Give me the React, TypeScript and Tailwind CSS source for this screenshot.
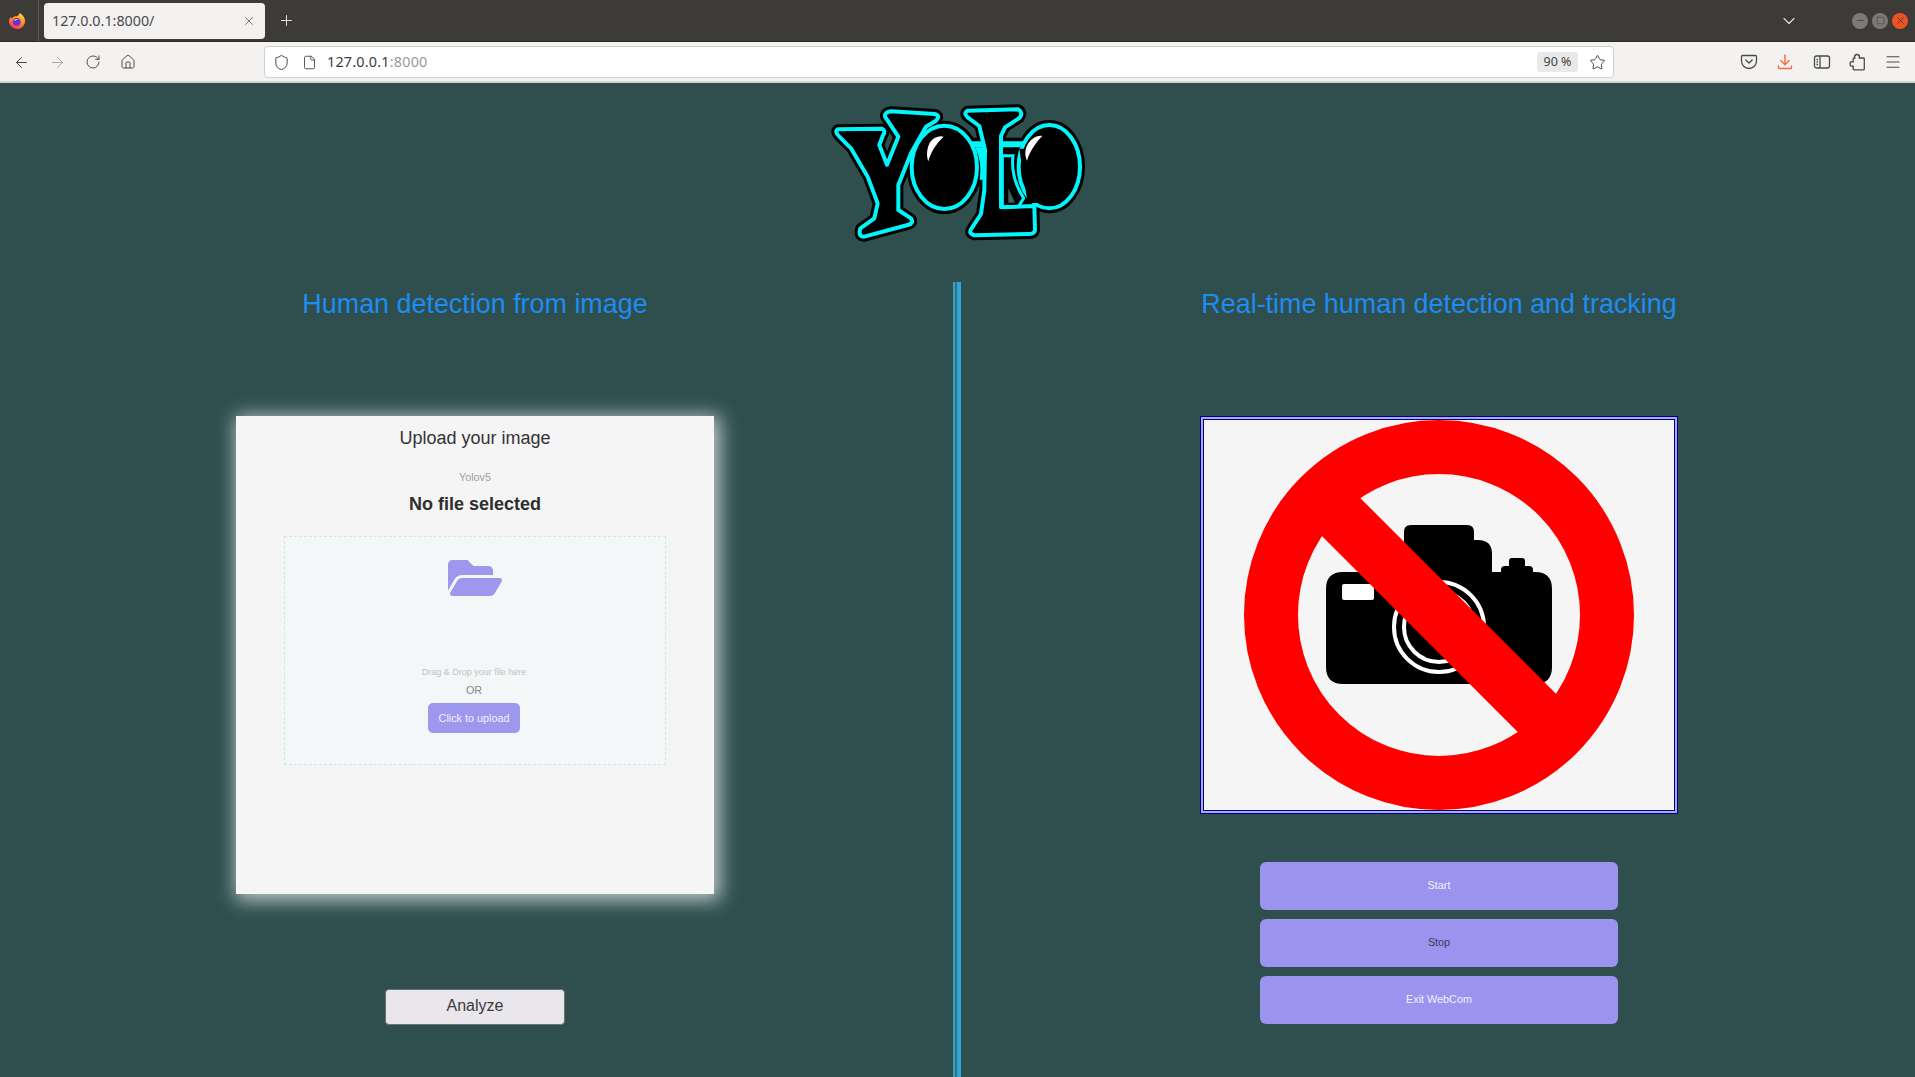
import React from "react";
import { ArrowLeft, ArrowRight, RotateCw, Home, Shield, File, Star, X, Plus, ChevronDown, Menu, Minus, Square } from "lucide-react";
import { FaFolderOpen } from "react-icons/fa";

const Firefox = () => (
  <svg width="18" height="18" viewBox="0 0 18 18">
    <defs>
      <linearGradient id="ff" x1="0.7" y1="0" x2="0.2" y2="1">
        <stop offset="0" stopColor="#ffd53d" />
        <stop offset="0.45" stopColor="#ff8a2b" />
        <stop offset="1" stopColor="#f5286e" />
      </linearGradient>
    </defs>
    <path d="M11.5 1c2.5 1.2 5.500 4 5.500 8.200 0 4.300-3.500 7.800-8 7.800S1 13.500 1 9.300c0-1.800.7-3.500 1.800-4.600.2 1 .6 1.500 1.200 1.800C5 4.500 7 4 9 4.200c1.200-.6 2.300-1.700 2.500-3.200z" fill="url(#ff)" />
    <circle cx="8.700" cy="9.800" r="3.900" fill="#6a2fd0" />
    <path d="M5 8c2-1.500 5-1.500 6.500 0-1.500-.5-3-.3-4 .8L5 8z" fill="#ffb03a" />
  </svg>
);

const L_PATH = "M470 62L622 58Q638 68 625 84L582 112L570 138L570 352L670 348L672 420Q670 432 655 432L490 436Q470 430 482 415L510 372L520 300L522 180L505 108L470 82Q456 70 470 62Z";
const Y_PATH = "M80 118L212 116Q226 122 216 136L205 165L228 224L262 140L222 80Q220 66 240 64L370 72Q390 76 375 92L345 110L300 190L262 285L262 360L300 385Q310 400 290 405L160 440Q140 440 148 415L190 385L200 340L170 260L120 175L85 140Q70 125 80 118Z";

const Logo = () => (
  <svg width="290" height="170" viewBox="0 0 870 510" className="block">
    <g strokeLinejoin="round">
      <g stroke="#000" strokeWidth="30" fill="#000">
        <ellipse cx="715" cy="230" rx="92" ry="125" />
        <path d="M478 158H640V350H572z" />
        <ellipse cx="400" cy="232" rx="98" ry="125" />
        <path d={L_PATH} />
        <path d={Y_PATH} />
      </g>
      <ellipse cx="715" cy="230" rx="92" ry="125" fill="#000" stroke="#00f6fb" strokeWidth="12" />
      <path d="M625 176L680 176L690 338L650 340Z" fill="#000" />
      <path d="M478 154H640L626 172H488z" fill="#00f6fb" />
      <path d="M574 197L606 197Q598 262 638 325L622 350L574 352Z" fill="#000" stroke="#00f6fb" strokeWidth="9" strokeLinejoin="miter" />
      <path d="M592 295L612 338H592Z" fill="#3f5f5f" />
      <ellipse cx="400" cy="232" rx="98" ry="125" fill="#000" stroke="#00f6fb" strokeWidth="12" />
      <path d="M492 172H522V268L506 270Q514 215 492 172Z" fill="#00f6fb" />
      <path d={L_PATH} fill="#000" stroke="#00f6fb" strokeWidth="12" />
      <path d={Y_PATH} fill="#000" stroke="#00f6fb" strokeWidth="12" />
      <path d="M398 140C385 135 368 142 358 155C348 172 345 195 352 214C358 190 375 160 398 140Z" fill="#fff" />
      <path d="M694 138C680 135 662 145 652 160C642 175 640 195 648 212C655 188 672 160 694 138Z" fill="#fff" />
    </g>
  </svg>
);

const NoCamera = () => (
  <svg viewBox="0 0 470 390" width="470" height="390" className="block">
    <path d="M200 112Q200 105 207 105H263Q270 105 270 112V120H274Q288 120 288 134V152H297V150Q297 146 301 146H305V141Q305 138 308 138H318Q321 138 321 141V146H325Q329 146 329 150V152H331Q348 152 348 169V247Q348 264 331 264H139Q122 264 122 247V169Q122 152 139 152H200Z" fill="#000" />
    <rect x="138" y="164" width="32" height="16" rx="2" fill="#fff" />
    <circle cx="235" cy="207" r="45" fill="none" stroke="#fff" strokeWidth="4" />
    <circle cx="235" cy="207" r="35" fill="none" stroke="#fff" strokeWidth="4" />
    <circle cx="235" cy="195" r="168" fill="none" stroke="#ff0000" strokeWidth="54" />
    <path d="M110 70L360 320" stroke="#ff0000" strokeWidth="54" />
  </svg>
);

const Pocket = () => (
  <svg width="18" height="18" viewBox="0 0 18 18" fill="none" stroke="#4a4a4a" strokeWidth="1.300" strokeLinecap="round" strokeLinejoin="round">
    <path d="M2.500 2.500h13a1 1 0 0 1 1 1V8a7.500 7.500 0 0 1-15 0V3.500a1 1 0 0 1 1-1z" />
    <path d="M5.800 7L9 10l3.200-3" />
  </svg>
);
const Download = () => (
  <svg width="18" height="18" viewBox="0 0 18 18" fill="none" stroke="#f9683f" strokeWidth="1.400" strokeLinecap="round" strokeLinejoin="round">
    <path d="M9 2v9.500M4.800 7.500L9 11.700l4.200-4.200M2.500 13v1.500a1 1 0 0 0 1 1h11a1 1 0 0 0 1-1V13" />
  </svg>
);
const Sidebar = () => (
  <svg width="18" height="18" viewBox="0 0 18 18" fill="none" stroke="#4a4a4a" strokeWidth="1.300">
    <rect x="1.500" y="3" width="15" height="12" rx="2" />
    <path d="M7 3v12M3.500 6.500h1.500M3.500 9h1.500M3.500 11.500h1.500" />
  </svg>
);
const Puzzle = () => (
  <svg width="18" height="18" viewBox="0 0 18 18" fill="none" stroke="#4a4a4a" strokeWidth="1.300" strokeLinejoin="round">
    <path d="M8 1.500c1.600 0 2.500 1 2.500 2.200 0 .5-.2.900-.4 1.300h4.400a.8.800 0 0 1 .8.800v10.200a.8.800 0 0 1-.8.800H5a.8.800 0 0 1-.8-.8v-3.200c-.4.200-.8.400-1.300.4C1.800 13.200 1 12.300 1 10.900s.8-2.300 1.900-2.300c.5 0 .9.200 1.300.4V5.800A.8.800 0 0 1 5 5h1c-.2-.4-.4-.8-.4-1.300 0-1.200.8-2.200 2.400-2.200z" />
  </svg>
);

const ToolIcon = ({ children, className = "" }: { children: React.ReactNode; className?: string }) => (
  <div className={`flex items-center justify-center h-[30px] ${className}`}>{children}</div>
);

const ActionButton = ({ label, dark }: { label: string; dark?: boolean }) => (
  <button className={`w-[358px] h-[48px] rounded-[6px] bg-[#9a94ee] text-[10.800px] pb-[2px] ${dark ? "text-[#3c3a5c]" : "text-[#f2f0ff]"}`}>
    {label}
  </button>
);

export default function App() {
  return (
    <div className="h-screen w-full flex flex-col overflow-hidden bg-[#2f4f4f] font-['Liberation_Sans',sans-serif]">
      {/* Browser tab strip */}
      <div className="h-[41px] shrink-0 bg-[#3c3b37] flex items-center">
        <div className="w-[39px] h-full flex items-center justify-center border-r border-[#5e5d59] pr-[5px]">
          <Firefox />
        </div>
        <div className="ml-[5px] w-[221px] h-[36px] rounded-[4px] bg-[#f2f1ef] flex items-center pl-[8px] pr-[9px] justify-between">
          <span className="font-['Noto_Sans',sans-serif] text-[14.300px] text-[#4a4a4f]">127.0.0.1:8000/</span>
          <X size={14} strokeWidth={1.300} className="text-[#55554f]" />
        </div>
        <Plus size={17} strokeWidth={1.400} className="ml-[13px] text-[#e4e3df]" />
        <div className="flex-1" />
        <ChevronDown size={20} strokeWidth={1.400} className="text-[#dddcd8] mr-[53px]" />
        <div className="flex items-center gap-[4px] mr-[7px]">
          <div className="w-[16px] h-[16px] rounded-full bg-[#7b7a76] flex items-center justify-center">
            <Minus size={11} strokeWidth={1.500} className="text-[#3c3b37]" />
          </div>
          <div className="w-[16px] h-[16px] rounded-full bg-[#7b7a76] flex items-center justify-center">
            <Square size={9} strokeWidth={1.500} className="text-[#3c3b37]" />
          </div>
          <div className="w-[16px] h-[16px] rounded-full bg-[#e95420] flex items-center justify-center">
            <X size={11} strokeWidth={1.700} className="text-[#3c3b37]" />
          </div>
        </div>
      </div>

      {/* Browser toolbar */}
      <div className="h-[42px] shrink-0 bg-[#f3f2f0] border-t border-[#2a2a28] border-b-2 border-b-[#d2d1cf] flex items-center pt-[1px]">
        <ToolIcon className="w-[18px] ml-[12px]"><ArrowLeft size={17} strokeWidth={1.400} className="text-[#444]" /></ToolIcon>
        <ToolIcon className="w-[18px] ml-[18px]"><ArrowRight size={17} strokeWidth={1.400} className="text-[#a9a9a9]" /></ToolIcon>
        <ToolIcon className="w-[18px] ml-[18px]"><RotateCw size={16} strokeWidth={1.400} className="text-[#444]" /></ToolIcon>
        <ToolIcon className="w-[18px] ml-[17px]"><Home size={16} strokeWidth={1.400} className="text-[#444]" /></ToolIcon>
        <div className="ml-[127px] w-[1350px] h-[32px] rounded-[4px] bg-white border border-[#cfcfcd] flex items-center pl-[8px] pr-[7px]">
          <Shield size={17} strokeWidth={1.400} className="text-[#444]" />
          <File size={15} strokeWidth={1.400} className="ml-[12px] text-[#444]" />
          <span className="ml-[10px] font-['Noto_Sans',sans-serif] text-[14.400px] text-[#3d3d3d] tracking-[0.200px]">
            127.0.0.1<span className="text-[#9a9a9a]">:8000</span>
          </span>
          <div className="flex-1" />
          <div className="w-[41px] h-[20px] rounded-[3px] bg-[#e9e9e9] flex items-center justify-center font-['Noto_Sans',sans-serif] text-[12.500px] text-[#444]">90 %</div>
          <Star size={17} strokeWidth={1.400} className="ml-[11px] text-[#444]" />
        </div>
        <div className="flex-1" />
        <ToolIcon className="w-[36px]"><Pocket /></ToolIcon>
        <ToolIcon className="w-[36px]"><Download /></ToolIcon>
        <ToolIcon className="w-[37px]"><Sidebar /></ToolIcon>
        <ToolIcon className="w-[36px]"><Puzzle /></ToolIcon>
        <ToolIcon className="w-[34px] mr-[5px]"><Menu size={18} strokeWidth={1.300} className="text-[#444]" /></ToolIcon>
      </div>

      {/* Logo band */}
      <div className="h-[199px] shrink-0 flex justify-center pt-[7px] pr-[4px]">
        <Logo />
      </div>

      {/* Two columns */}
      <div className="flex-1 flex min-h-0">
        <section className="w-[950px] shrink-0 flex flex-col items-center">
          <h2 className="mt-[5px] text-[26.900px] leading-[34px] text-[#1e8cf0]">Human detection from image</h2>
          <div className="mt-[95px] w-[478px] h-[478px] bg-[#f5f5f5] shadow-[3px_3px_18px_3px_rgba(255,255,255,0.7)] flex flex-col items-center">
            <div className="mt-[11px] text-[18px] leading-[22px] text-[#333]">Upload your image</div>
            <div className="mt-[21px] text-[10.800px] leading-[14px] text-[#a0a0a0]">Yolov5</div>
            <div className="mt-[9px] text-[18px] leading-[22px] font-bold text-[#2e2e2e]">No file selected</div>
            <div className="mt-[21px] w-[382px] h-[229px] bg-[#f3f7f8] border border-dashed border-[#cfe9e7] flex flex-col items-center">
              <FaFolderOpen size={54} className="mt-[14px] text-[#9d97ee]" />
              <div className="mt-[61px] -ml-[2px] text-[9px] leading-[12px] text-[#c2c2c2]">Drag &amp; Drop your file here</div>
              <div className="mt-[6px] -ml-[2px] text-[10.800px] leading-[13px] text-[#888]">OR</div>
              <button className="mt-[6px] -ml-[2px] w-[92px] h-[30px] rounded-[5px] bg-[#9d97ee] text-[10.800px] text-[#f4f2ff]">Click to upload</button>
            </div>
          </div>
          <button className="mt-[95px] w-[180px] h-[36px] rounded-[4px] bg-[#e9e7ec] border border-[#6f727d] text-[16px] text-[#3a3a3a] pb-[2px]">Analyze</button>
        </section>

        <div className="ml-[3px] w-[8px] shrink-0 flex">
          <div className="w-[2px] bg-[#3f9fc0]" />
          <div className="w-[2px] bg-[#2b7488]" />
          <div className="w-[2px] bg-[#3f9fc8]" />
          <div className="w-[2px] bg-[#2aa6e0]" />
        </div>

        <section className="flex-1 flex flex-col items-center pl-[2px]">
          <h2 className="mt-[5px] text-[26.900px] leading-[34px] text-[#1e8cf0]">Real-time human detection and tracking</h2>
          <div className="mt-[95px] w-[478px] h-[398px] border border-[#00008b] bg-[#aaaae8] p-[2px]">
            <div className="w-full h-full border border-[#00008b] bg-[#f5f5f5] overflow-hidden">
              <NoCamera />
            </div>
          </div>
          <div className="mt-[48px] flex flex-col gap-[9px]">
            <ActionButton label="Start" />
            <ActionButton label="Stop" dark />
            <ActionButton label="Exit WebCom" />
          </div>
        </section>
      </div>
    </div>
  );
}
